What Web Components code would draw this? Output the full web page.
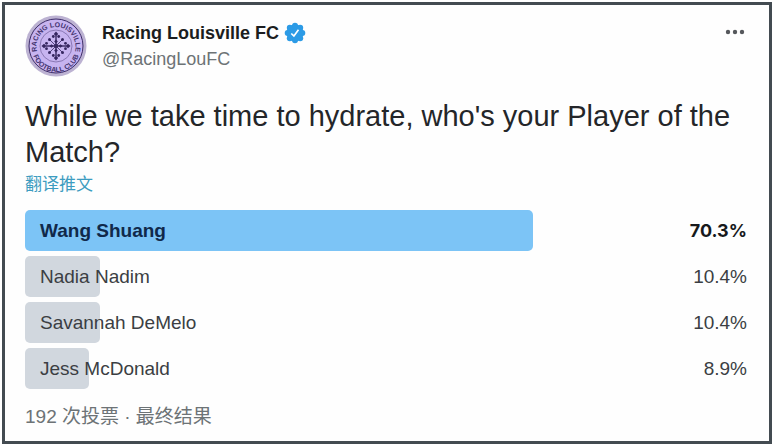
<!DOCTYPE html>
<html lang="zh-CN">
<head>
<meta charset="utf-8">
<title>Racing Louisville FC</title>
<style>
  body {
    margin: 2px 5px 4px 2px;
    background: #fff;
    color: #1b1d20;
    font-family: "Liberation Sans", "Noto Sans CJK SC", sans-serif;
  }
</style>
</head>
<body>

<tweet-card>
  <tweet-author slot="author" name="Racing Louisville FC" handle="@RacingLouFC">
    <club-crest></club-crest>
  </tweet-author>
  <span slot="text">While we take time to hydrate, who's your Player of the Match?</span>
  <tweet-poll slot="poll">
    <poll-choice label="Wang Shuang" percent="70.3" winner></poll-choice>
    <poll-choice label="Nadia Nadim" percent="10.4"></poll-choice>
    <poll-choice label="Savannah DeMelo" percent="10.4"></poll-choice>
    <poll-choice label="Jess McDonald" percent="8.9"></poll-choice>
    <span slot="summary">192 次投票 · 最终结果</span>
  </tweet-poll>
</tweet-card>

<script>
class ClubCrest extends HTMLElement {
  connectedCallback() {
    // one arm of the cross, turned four times
    const arm = `
      <path d="M30.300 30 V21 H31.700 V30 Z"/>
      <path d="M31 16.500 L33.200 19 L31 21.500 L28.800 19 Z"/>
      <circle cx="28.300" cy="21.500" r="1.400"/><circle cx="33.700" cy="21.500" r="1.400"/>
      <path d="M31 31 L38 24" stroke="#35265f" stroke-width=".8"/>
      <circle cx="37.500" cy="24.500" r="1.500"/>
      <path d="M31 24.500 L32.800 26.500 L31 28.500 L29.200 26.500 Z"/>`
    this.attachShadow({ mode: 'open' }).innerHTML = `
      <style>
        :host { display: block; width: 62px; height: 62px; flex: none; }
        svg { display: block; width: 100%; height: 100%; }
        text { font: bold 7px "Liberation Sans", sans-serif; fill: #43336f; }
      </style>
      <svg viewBox="0 0 62 62" role="img" aria-label="Racing Louisville Football Club">
        <defs>
          <path id="top" d="M14.500 42 A19.500 19.500 0 1 1 47.500 42"/>
          <path id="bottom" d="M7 33 A24 24 0 0 0 55 33"/>
        </defs>
        <circle cx="31" cy="31" r="30.500" fill="#bcb2d2"/>
        <circle cx="31" cy="31" r="27" fill="#c7b4f0" stroke="#3c2c68" stroke-width="1"/>
        <circle cx="31" cy="31" r="16" fill="none" stroke="#7a68a4" stroke-width=".8"/>
        <text><textPath href="#top" startOffset="50%" text-anchor="middle">RACING LOUISVILLE</textPath></text>
        <text><textPath href="#bottom" startOffset="50%" text-anchor="middle">FOOTBALL CLUB</textPath></text>
        <g fill="#35265f">
          <g>${arm}</g>
          <g transform="rotate(90 31 31)">${arm}</g>
          <g transform="rotate(180 31 31)">${arm}</g>
          <g transform="rotate(270 31 31)">${arm}</g>
          <circle cx="31" cy="31" r="2"/>
        </g>
      </svg>`
  }
}

class TweetAuthor extends HTMLElement {
  connectedCallback() {
    this.attachShadow({ mode: 'open' }).innerHTML = `
      <style>
        :host { display: flex; gap: 15px; }
        .who { flex: 1; padding-top: 5px; font-size: 18px; line-height: 26px; }
        .name { display: flex; align-items: center; gap: 5px; font-weight: bold; }
        .handle { color: #6d7376; }
        .name svg { width: 22px; height: 22px; }
        button { align-self: flex-start; margin-top: 7px; padding: 0; border: 0; background: none; cursor: pointer; }
        button svg { display: block; width: 24px; height: 20px; }
      </style>
      <slot></slot>
      <div class="who">
        <div class="name">
          <span>${this.getAttribute('name')}</span>
          <svg viewBox="0 0 22 22" role="img" aria-label="认证账号">
            <g fill="#2c9be6">
              <circle cx="11" cy="11" r="8.500"/>
              <circle cx="11" cy="3.700" r="3"/><circle cx="16.200" cy="5.800" r="3"/>
              <circle cx="18.300" cy="11" r="3"/><circle cx="16.200" cy="16.200" r="3"/>
              <circle cx="11" cy="18.300" r="3"/><circle cx="5.800" cy="16.200" r="3"/>
              <circle cx="3.700" cy="11" r="3"/><circle cx="5.800" cy="5.800" r="3"/>
            </g>
            <path d="M7.300 11.500 L9.900 14 L14.500 7.800" fill="none" stroke="#fff" stroke-width="1.700"/>
          </svg>
        </div>
        <div class="handle">${this.getAttribute('handle')}</div>
      </div>
      <button type="button" aria-label="更多">
        <svg viewBox="0 0 24 20" fill="#55585c">
          <circle cx="5" cy="10" r="2.200"/><circle cx="12" cy="10" r="2.200"/><circle cx="19" cy="10" r="2.200"/>
        </svg>
      </button>`
  }
}

class PollChoice extends HTMLElement {
  connectedCallback() {
    const percent = this.getAttribute('percent')
    // the bar lies under the label and the value
    this.attachShadow({ mode: 'open' }).innerHTML = `
      <style>
        :host {
          position: relative;
          display: flex; justify-content: space-between;
          padding-left: 15px;
          font-size: 19px; line-height: 41px;
          color: #3b3e43;
        }
        .bar { position: absolute; top: 0; bottom: 0; left: 0; width: ${percent}%; border-radius: 5px; background: #d1d7de; }
        .label, .value { position: relative; }
        :host([winner]) { font-weight: bold; color: #17191c; }
        :host([winner]) .bar { background: #7cc4f6; }
        :host([winner]) .label { color: #10294a; }
        :host([winner]) .value { font-family: Inter, "Liberation Sans", sans-serif; font-size: 18px; }
      </style>
      <div class="bar"></div>
      <span class="label">${this.getAttribute('label')}</span>
      <span class="value">${percent}%</span>`
  }
}

class TweetPoll extends HTMLElement {
  connectedCallback() {
    this.attachShadow({ mode: 'open' }).innerHTML = `
      <style>
        :host { display: block; }
        .choices { display: grid; gap: 5px; }
        .summary { margin-top: 16px; color: #6d7376; font-size: 19px; line-height: 24px; }
      </style>
      <div class="choices"><slot></slot></div>
      <div class="summary"><slot name="summary"></slot></div>`
  }
}

class TweetCard extends HTMLElement {
  connectedCallback() {
    this.attachShadow({ mode: 'open' }).innerHTML = `
      <style>
        :host { display: block; padding: 10px 22px 12px 20px; border: 3px solid #434b51; background: #fefefe; }
        .text { margin: 21px 0 0; font-size: 29px; line-height: 36px; color: #242629; }
        a { display: block; width: fit-content; margin: 5px 0 15px; color: #3d9cc0; font-size: 17px; line-height: 20px; text-decoration: none; }
      </style>
      <slot name="author"></slot>
      <p class="text"><slot name="text"></slot></p>
      <a href="#">翻译推文</a>
      <slot name="poll"></slot>`
  }
}

customElements.define('club-crest', ClubCrest)
customElements.define('tweet-author', TweetAuthor)
customElements.define('poll-choice', PollChoice)
customElements.define('tweet-poll', TweetPoll)
customElements.define('tweet-card', TweetCard)
</script>
</body>
</html>
